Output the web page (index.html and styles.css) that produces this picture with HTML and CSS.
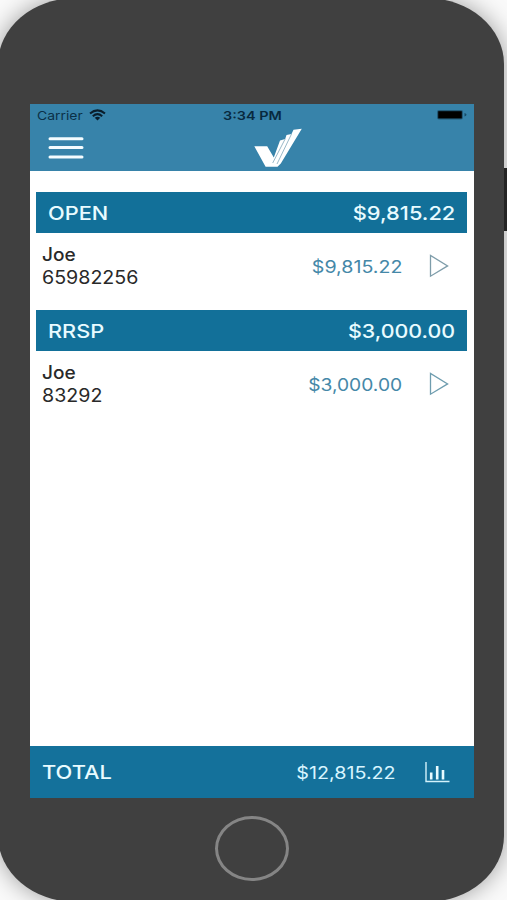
FILE: index.html
```html
<!DOCTYPE html>
<html lang="en">
<head>
<meta charset="utf-8">
<title>Accounts</title>
<link rel="stylesheet" href="styles.css">
</head>
<body>
<div class="phone">
  <div class="screen">
    <header class="header">
      <div class="status">
        <div class="carrier"><span class="carrier-name">Carrier</span>
          <svg class="wifi" width="17" height="12" viewBox="0 0 17 12"><g fill="none" stroke="#0a1d2b" stroke-width="2"><path d="M1 4.6Q8.5-1.8 16 4.6"/><path d="M3.8 7.2Q8.5 3 13.2 7.2"/></g><path d="M5.7 8.8Q8.5 6.5 11.3 8.8L8.5 11.5Z" fill="#0a1d2b"/></svg>
        </div>
        <span class="time">3:34 PM</span>
        <svg class="battery" width="31" height="12" viewBox="0 0 31 12"><rect x="1" y="1" width="26" height="9.5" rx="2" fill="#245b79"/><rect x="2.2" y="2.2" width="23.6" height="7.2" fill="#000"/><path d="M28.5 4v3.5q2-.4 2-1.75T28.5 4Z" fill="#174d69"/></svg>
      </div>
      <div class="nav">
        <svg class="menu" width="36" height="24" viewBox="0 0 36 24"><path d="M2 2.7H34M2 11.5H34M2 20.9H34" stroke="#f4fcff" stroke-width="3" stroke-linecap="round"/></svg>
        <svg class="logo" width="48" height="40" viewBox="0 0 48 40"><path d="M.3 18.2H13.2L19.8 29.6L26 12.5L31.2 10.9L32.5 7L37.5 6L39.5 1.7L47.8.8L26.8 35.5L23.5 38.8H11.6Z" fill="#fff"/><path d="M18.7 35L31.2 10.9M23 36L37.5 6" stroke="#9ab9c9" stroke-width="1" fill="none"/></svg>
      </div>
    </header>
    <main class="accounts">
      <section class="group">
        <div class="group-bar"><span class="group-name">OPEN</span><span class="group-sum wide">$9,815.22</span></div>
        <div class="account">
          <div class="owner"><span class="name">Joe</span><span class="number">65982256</span></div>
          <span class="amount wide">$9,815.22</span>
          <svg class="arrow" width="20" height="24" viewBox="0 0 20 24"><path d="M1.5 1.5V22.2L18.6 11.9Z" fill="none" stroke="#7f9daa" stroke-width="1.3"/></svg>
        </div>
      </section>
      <section class="group">
        <div class="group-bar"><span class="group-name">RRSP</span><span class="group-sum">$3,000.00</span></div>
        <div class="account">
          <div class="owner"><span class="name">Joe</span><span class="number">83292</span></div>
          <span class="amount">$3,000.00</span>
          <svg class="arrow" width="20" height="24" viewBox="0 0 20 24"><path d="M1.5 1.5V22.2L18.6 11.9Z" fill="none" stroke="#6f9daf" stroke-width="1.3"/></svg>
        </div>
      </section>
    </main>
    <footer class="footer">
      <span class="total">TOTAL</span>
      <span class="total-sum">$12,815.22</span>
      <svg class="chart" width="25" height="21" viewBox="0 0 25 21"><path d="M1 0V19.5H24.5" fill="none" stroke="#d3f2fb" stroke-width="1.4"/><path d="M6.2 10.5V17.5M12.2 4V17.5M18 8V17.5" stroke="#e8fbff" stroke-width="2.6"/></svg>
    </footer>
  </div>
  <div class="home"></div>
</div>
<div class="side-button"></div>
</body>
</html>
```
FILE: styles.css
```css
* { box-sizing: border-box; }
body {
  margin: 0;
  width: 507px;
  height: 900px;
  position: relative;
  overflow: hidden;
  background: #fafafa;
  font-family: Inter, "Liberation Sans", sans-serif;
  white-space: nowrap;
}
.phone {
  display: flow-root;
  width: 506px;
  height: 904px;
  margin: -2px 0 0 -2px;
  padding: 106px 0 0 32px;
  border-radius: 78px / 66px;
  background: #404040;
  box-shadow: 0 0 24px #00000060;
}
.screen {
  width: 444px;
  height: 694px;
  display: flex;
  flex-direction: column;
  background: #fff;
}
.header { height: 67px; background: #3783aa; }
.status {
  height: 22px;
  padding: 0 7px;
  display: grid;
  grid-template-columns: 1fr auto 1fr;
  align-items: center;
  color: #0b3047;
  font-size: 12px;
}
.carrier { display: flex; align-items: center; }
.carrier-name { width: 52px; transform: scaleX(1.16); transform-origin: left; }
.time { color: #08293e; font-weight: 600; transform: scaleX(1.2); }
.battery { justify-self: end; }
.nav { height: 45px; display: flex; }
.menu { margin: 10px 0 0 18px; }
.logo { margin: 2px 0 0 170px; }
.accounts { flex: 1; padding: 21px 7px 0 6px; }
.group { height: 118px; }
.group-bar {
  height: 41px;
  display: flex;
  justify-content: space-between;
  align-items: center;
  padding: 1px 12px 0;
  background: #127099;
  color: #e8fbff;
  font-size: 19px;
  font-weight: 500;
}
.group-name { transform: scaleX(1.145); transform-origin: left; }
.group-sum { transform: scaleX(1.127); transform-origin: right; }
.group-sum.wide { transform: scaleX(1.148); }
.account { height: 66px; display: flex; align-items: center; padding: 0 18px 0 6px; }
.owner { flex: 1; display: flex; flex-direction: column; font-size: 18px; line-height: 23px; color: #292929; }
.name { font-weight: 500; transform: scaleX(1.06); transform-origin: left; }
.number { transform: scaleX(1.09); transform-origin: left; }
.amount { color: #4588a8; font-size: 17px; transform: translateY(1px) scaleX(1.13); transform-origin: right; }
.amount.wide { transform: translateY(1px) scaleX(1.155); }
.arrow { margin-left: 27px; }
.footer {
  height: 52px;
  display: flex;
  align-items: center;
  padding: 0 24px 0 12px;
  background: #14719b;
  color: #e8fbff;
}
.total { flex: 1; font-size: 19px; font-weight: 500; transform: scaleX(1.15); transform-origin: left; }
.total-sum { font-size: 17px; color: #d8f5ff; transform: translateY(1px) scaleX(1.16); transform-origin: right; }
.chart { margin-left: 29px; }
.home {
  width: 74px;
  height: 65px;
  margin: 18px 0 0 185px;
  border: 3px solid #858585;
  border-radius: 50%;
}
.side-button { position: absolute; left: 504px; top: 168px; width: 3px; height: 63px; background: #242424; }
```
